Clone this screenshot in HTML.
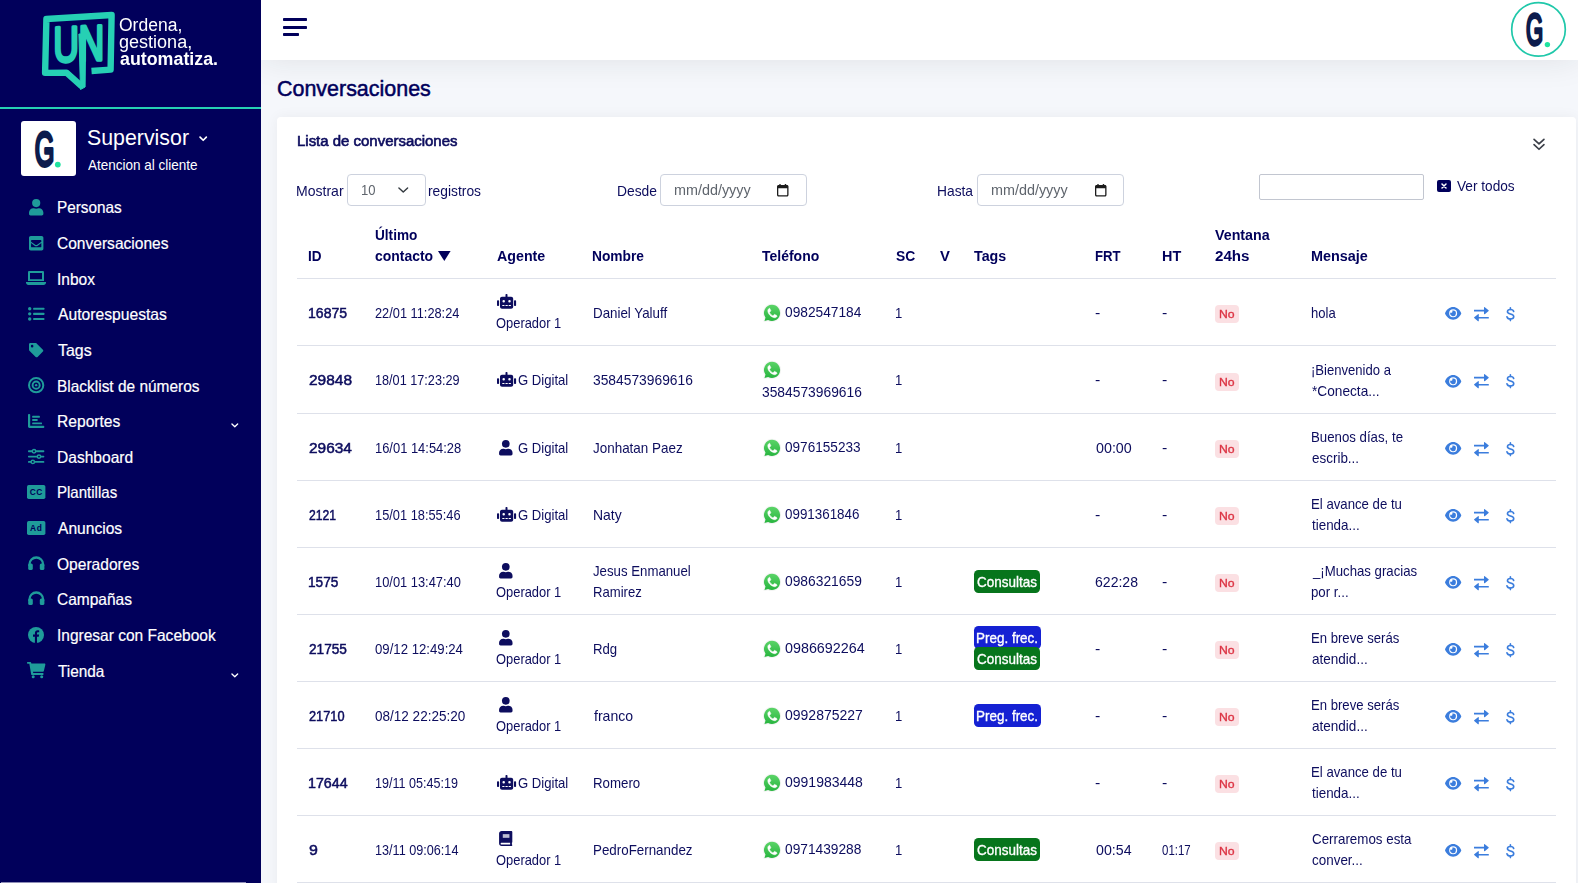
<!DOCTYPE html>
<html lang="es"><head><meta charset="utf-8"><title>Conversaciones</title>
<style>
*{box-sizing:border-box}
html,body{margin:0;padding:0}
body{width:1578px;height:883px;overflow:hidden;position:relative;background:#f5f7fb;
 font-family:"Liberation Sans",sans-serif;font-size:14.5px;color:#0d0d5e}
.t{position:absolute;white-space:nowrap;line-height:20px;transform-origin:0 50%;margin:0;font-weight:400}
.ic{position:absolute;display:block;overflow:visible}
.gray{position:absolute;left:0;top:0;width:1578px;height:883px;will-change:transform}
#sidebar{position:absolute;left:0;top:0;width:261px;height:883px;background:#01005b;z-index:5}
#sidebar .rule{position:absolute;left:0;top:107px;width:261px;height:2px;background:#26d0b4}
#sidebar .avatar{position:absolute;left:21px;top:121px;width:55px;height:55px;background:#fff;border-radius:3px}
#sidebar .hscroll{position:absolute;left:1px;top:882px;width:245px;height:1px;background:#8e8db6}
#topbar{position:absolute;left:261px;top:0;width:1317px;height:60px;background:#fff;box-shadow:0 0 32px 0 rgba(33,37,41,.1)}
#topbar .bar{position:absolute;left:22px;height:3px;background:#01005b;border-radius:.8px}
#card{position:absolute;left:277px;top:117px;width:1299px;height:780px;background:#fff;border-radius:4px;box-shadow:0 0 14px 0 rgba(33,37,41,.05)}
.box{position:absolute;background:#fff;border:1px solid #cdd2de;border-radius:4px}
.hr{position:absolute;left:297px;width:1259px;height:1px;background:#dee1ea}
.badge{position:absolute;border-radius:4px;height:18px}
.no{background:#fbe0e3;width:24px}
.tag{border-radius:4.500px;height:23px}
.nv{-webkit-text-stroke:.2px currentColor}
.med{-webkit-text-stroke:.35px currentColor}
.sb{-webkit-text-stroke:.5px currentColor}
.sb2{-webkit-text-stroke:.65px currentColor}
.xsq{position:absolute;background:#01005b;border-radius:2px}
</style></head><body>
<aside id="sidebar">
<svg class="ic" style="left:0.0px;top:0.0px" width="261.0" height="107.0" viewBox="0 0 261 107" aria-hidden="true"><path d="M91.500 71L110.600 69.600L111.600 15L46.400 19L45.100 72.900L66.500 72.600L81.800 86.400" fill="none" stroke="#26d0b4" stroke-width="6.400" stroke-linejoin="round" stroke-linecap="butt"/><path d="M78.900 34L85.700 34L85.100 87L80.500 89.500z" fill="#26d0b4" stroke="#26d0b4" stroke-width="1" stroke-linejoin="round"/><text transform="translate(53.50 61.90) skewY(-2.4) scale(0.3502 0.4957)" font-family="Liberation Sans, sans-serif" font-size="100" fill="#26d0b4" stroke="#26d0b4" stroke-width="3.2" stroke-linejoin="round" vector-effect="non-scaling-stroke">UN</text></svg>
<div class="gray" style="width:261px;height:100px">
<span class="t" style="left:119.2px;top:15px;font-size:17.6px;color:#fff;transform:scaleX(0.995)">Ordena,</span>
<span class="t" style="left:119.3px;top:32px;font-size:17.6px;color:#fff;transform:scaleX(1.025)">gestiona,</span>
<span class="t" style="left:119.5px;top:49px;font-size:17.6px;font-weight:700;color:#fff;transform:scaleX(1.013)">automatiza.</span>
</div>
<div class="rule"></div>
<div class="avatar"></div>
<svg class="ic" style="left:32.0px;top:127.0px" width="34.0" height="46.0" viewBox="0 0 34 46" aria-hidden="true"><text transform="translate(2.72 38.82) scale(0.2515 0.4850)" font-family="Liberation Sans, sans-serif" font-size="100" fill="#0c1c4d" stroke="#0c1c4d" stroke-width="3.0" stroke-linejoin="round" vector-effect="non-scaling-stroke">G</text><circle cx="25.80" cy="37.60" r="2.9" fill="#1fe3a0"/></svg>
<span class="t" style="left:87.1px;top:127px;font-size:22.8px;color:#fff;transform:scaleX(0.936)">Supervisor</span>
<svg class="ic" style="left:199.0px;top:136.0px" width="8.4" height="5.4" viewBox="0 0 8 5" aria-hidden="true"><path d="M1 1l3 3 3-3" fill="none" stroke="#fff" stroke-width="1.6" stroke-linecap="round" stroke-linejoin="round"/></svg>
<span class="t" style="left:88.0px;top:155px;font-size:14.5px;color:#fff;transform:scaleX(0.931)">Atencion al cliente</span>
<nav>
<svg class="ic" style="left:28.8px;top:198.8px" width="14.4" height="16.4" viewBox="0 0 14 16" fill="#1f9b9a" aria-hidden="true"><circle cx="7" cy="4" r="4"/><path d="M0 14.6v-1.3c0-2.3 1.9-4.2 4.2-4.2h.55c.7.3 1.45.5 2.25.5s1.55-.2 2.25-.5h.55c2.3 0 4.2 1.900 4.2 4.2v1.3c0 .8-.7 1.4-1.500 1.4H1.500c-.8 0-1.500-.6-1.500-1.400z"/></svg>
<a class="t nv" style="left:56.6px;top:197px;font-size:16.5px;color:#fff;transform:scaleX(0.929)">Personas</a>
<svg class="ic" style="left:28.8px;top:235.8px" width="14.4" height="14.4" viewBox="0 0 14 14" fill="#1f9b9a" aria-hidden="true"><path fill-rule="evenodd" d="M1.700 0h10.600c.94 0 1.700.76 1.700 1.700v10.600c0 .94-.76 1.700-1.700 1.700H1.700C.76 14 0 13.240 0 12.300V1.700C0 .76.760 0 1.700 0zM2 4.600v.9l4.100 3c.5.400 1.300.400 1.800 0l4.100-3v-.9c0-.33-.27-.6-.6-.6H2.600c-.33 0-.6.270-.6.600zM2 6.900v3.500c0 .33.270.6.6.6h8.800c.33 0 .6-.27.6-.6V6.900L8.600 9.400c-.95.700-2.250.7-3.200 0z"/></svg>
<a class="t nv" style="left:57.0px;top:233px;font-size:16.5px;color:#fff;transform:scaleX(0.942)">Conversaciones</a>
<svg class="ic" style="left:26.0px;top:271.0px" width="20.0" height="14.0" viewBox="0 0 20 14" fill="#1f9b9a" aria-hidden="true"><path fill-rule="evenodd" d="M3.200 0h13.600c.66 0 1.200.54 1.200 1.200V10H2V1.200C2 .54 2.540 0 3.200 0zM4 2v6.200h12V2z"/><path d="M0 11h20v.6c0 1.300-1.100 2.400-2.400 2.400H2.400C1.100 14 0 12.900 0 11.600z"/></svg>
<a class="t nv" style="left:57.4px;top:269px;font-size:16.5px;color:#fff;transform:scaleX(0.940)">Inbox</a>
<svg class="ic" style="left:28.0px;top:307.1px" width="16.4" height="13.7" viewBox="0 0 16.4 13.7" fill="#1f9b9a" aria-hidden="true"><circle cx="1.700" cy="1.7" r="1.700"/><rect x="5.200" y="0.65" width="11.2" height="2.100" rx=".5"/><circle cx="1.700" cy="6.85" r="1.700"/><rect x="5.200" y="5.80" width="11.2" height="2.100" rx=".5"/><circle cx="1.700" cy="12" r="1.700"/><rect x="5.200" y="10.95" width="11.2" height="2.100" rx=".5"/></svg>
<a class="t nv" style="left:57.8px;top:304px;font-size:16.5px;color:#fff;transform:scaleX(0.950)">Autorespuestas</a>
<svg class="ic" style="left:28.7px;top:342.8px" width="14.3" height="14.3" viewBox="0 0 14.6 14.6" fill="#1f9b9a" aria-hidden="true"><path fill-rule="evenodd" d="M0 6.800V1.400C0 .63.630 0 1.400 0h5.400c.37 0 .73.150.99.410l6.400 6.400c.55.550.55 1.430 0 1.980l-5.400 5.400c-.55.55-1.430.55-1.980 0l-6.400-6.400C.150 7.530 0 7.170 0 6.800zM3.200 1.900a1.300 1.300 0 1 0 0 2.600a1.300 1.300 0 0 0 0-2.600z"/></svg>
<a class="t nv" style="left:57.5px;top:340px;font-size:16.5px;color:#fff;transform:scaleX(0.964)">Tags</a>
<svg class="ic" style="left:28.0px;top:377.0px" width="16.3" height="16.3" viewBox="0 0 16 16" aria-hidden="true"><circle cx="8" cy="8" r="7" fill="none" stroke="#1f9b9a" stroke-width="2"/><circle cx="8" cy="8" r="3.500" fill="none" stroke="#1f9b9a" stroke-width="1.900"/><circle cx="8" cy="8" r="1.200" fill="#1f9b9a"/></svg>
<a class="t nv" style="left:56.6px;top:376px;font-size:16.5px;color:#fff;transform:scaleX(0.936)">Blacklist de números</a>
<svg class="ic" style="left:28.0px;top:414.0px" width="16.3" height="14.0" viewBox="0 0 16.3 14" fill="#1f9b9a" aria-hidden="true"><path d="M0 .8C0 .36.360 0 .8 0h.6c.44 0 .8.360.8.800V11.800h13.300c.44 0 .8.360.8.800v.6c0 .44-.36.8-.8.800H1.400C.630 14 0 13.370 0 12.600z"/><rect x="4.200" y="1.800" width="7.600" height="1.900" rx=".5"/><rect x="4.200" y="5.100" width="5.400" height="1.900" rx=".5"/><rect x="4.200" y="8.400" width="9.800" height="1.900" rx=".5"/></svg>
<a class="t nv" style="left:56.6px;top:411px;font-size:16.5px;color:#fff;transform:scaleX(0.946)">Reportes</a>
<svg class="ic" style="left:231.0px;top:422.6px" width="7.6" height="4.8" viewBox="0 0 8 5" aria-hidden="true"><path d="M1 1l3 3 3-3" fill="none" stroke="#fff" stroke-width="1.4" stroke-linecap="round" stroke-linejoin="round"/></svg>
<svg class="ic" style="left:28.0px;top:449.0px" width="16.3" height="15.2" viewBox="0 0 16.3 15.2" aria-hidden="true"><rect x="0" y="1.35" width="16.3" height="1.900" rx=".7" fill="#1f9b9a"/><circle cx="6" cy="2.3" r="1.700" fill="#01005b" stroke="#1f9b9a" stroke-width="1.500"/><rect x="0" y="6.65" width="16.3" height="1.900" rx=".7" fill="#1f9b9a"/><circle cx="11" cy="7.6" r="1.700" fill="#01005b" stroke="#1f9b9a" stroke-width="1.500"/><rect x="0" y="11.95" width="16.3" height="1.900" rx=".7" fill="#1f9b9a"/><circle cx="4.8" cy="12.9" r="1.700" fill="#01005b" stroke="#1f9b9a" stroke-width="1.500"/></svg>
<a class="t nv" style="left:56.6px;top:447px;font-size:16.5px;color:#fff;transform:scaleX(0.943)">Dashboard</a>
<svg class="ic" style="left:26.8px;top:485.0px" width="18.4" height="14.0" viewBox="0 0 18.4 14" aria-hidden="true"><rect x="0" y="0" width="18.4" height="14" rx="1.700" fill="#1f9b9a"/><text x="9.200" y="10" text-anchor="middle" font-family="Liberation Sans, sans-serif" font-weight="700" font-size="8.4" letter-spacing=".5" fill="#01005b">CC</text></svg>
<a class="t nv" style="left:56.6px;top:482px;font-size:16.5px;color:#fff;transform:scaleX(0.911)">Plantillas</a>
<svg class="ic" style="left:26.8px;top:521.0px" width="18.4" height="14.0" viewBox="0 0 18.4 14" aria-hidden="true"><rect x="0" y="0" width="18.4" height="14" rx="1.700" fill="#1f9b9a"/><text x="9.200" y="10" text-anchor="middle" font-family="Liberation Sans, sans-serif" font-weight="700" font-size="8.4" letter-spacing=".5" fill="#01005b">Ad</text></svg>
<a class="t nv" style="left:57.8px;top:518px;font-size:16.5px;color:#fff;transform:scaleX(0.944)">Anuncios</a>
<svg class="ic" style="left:27.8px;top:556.1px" width="16.6" height="14.0" viewBox="0 0 16.6 14" aria-hidden="true"><path d="M1.500 10V8.300A6.800 6.800 0 0 1 15.100 8.300V10" fill="none" stroke="#1f9b9a" stroke-width="2.300"/><rect x=".2" y="7.400" width="4.600" height="6.600" rx="1.600" fill="#1f9b9a"/><rect x="11.800" y="7.400" width="4.600" height="6.600" rx="1.600" fill="#1f9b9a"/></svg>
<a class="t nv" style="left:57.1px;top:554px;font-size:16.5px;color:#fff;transform:scaleX(0.943)">Operadores</a>
<svg class="ic" style="left:27.8px;top:591.1px" width="16.6" height="14.0" viewBox="0 0 16.6 14" aria-hidden="true"><path d="M1.500 10V8.300A6.800 6.800 0 0 1 15.100 8.300V10" fill="none" stroke="#1f9b9a" stroke-width="2.300"/><rect x=".2" y="7.400" width="4.600" height="6.600" rx="1.600" fill="#1f9b9a"/><rect x="11.800" y="7.400" width="4.600" height="6.600" rx="1.600" fill="#1f9b9a"/></svg>
<a class="t nv" style="left:57.0px;top:589px;font-size:16.5px;color:#fff;transform:scaleX(0.940)">Campañas</a>
<svg class="ic" style="left:28.0px;top:627.0px" width="16.0" height="16.0" viewBox="0 0 16 16" aria-hidden="true"><circle cx="8" cy="8" r="8" fill="#1f9b9a"/><path d="M6.900 16V9.700H5V7.600h1.900V6.200c0-1.900 1.100-2.900 2.800-2.900.6 0 1.200.1 1.500.150v1.900h-1c-.9 0-1.200.5-1.200 1.150V7.600h2.100l-.35 2.100H9V16z" fill="#01005b"/></svg>
<a class="t nv" style="left:57.4px;top:625px;font-size:16.5px;color:#fff;transform:scaleX(0.940)">Ingresar con Facebook</a>
<svg class="ic" style="left:26.8px;top:661.9px" width="18.4" height="16.2" viewBox="0 0 18.4 16.2" fill="#1f9b9a" aria-hidden="true"><path d="M.6 0h2.700c.4 0 .7.250.8.600L4.350 1.600h13.200c.55 0 .95.500.8 1.050l-1.500 6.400c-.1.400-.4.650-.8.650H6l.25 1.300h9.500c.5 0 .9.500.8 1l-.1.500c-.1.350-.4.600-.8.600H5c-.4 0-.7-.25-.8-.650L2.350 1.700H.6C.250 1.700 0 1.400 0 1.100V.6C0 .250.250 0 .600 0z"/><circle cx="6.200" cy="14.700" r="1.500"/><circle cx="14.700" cy="14.700" r="1.500"/></svg>
<a class="t nv" style="left:57.5px;top:661px;font-size:16.5px;color:#fff;transform:scaleX(0.931)">Tienda</a>
<svg class="ic" style="left:231.0px;top:672.6px" width="7.6" height="4.8" viewBox="0 0 8 5" aria-hidden="true"><path d="M1 1l3 3 3-3" fill="none" stroke="#fff" stroke-width="1.4" stroke-linecap="round" stroke-linejoin="round"/></svg>
</nav>
<div class="hscroll"></div>
</aside>
<header id="topbar">
<div class="bar" style="top:18px;width:24px"></div><div class="bar" style="top:26px;width:24px"></div><div class="bar" style="top:33.300px;width:16px"></div>
</header>
<svg class="ic" style="left:1509.0px;top:0.0px" width="60.0" height="60.0" viewBox="0 0 60 60" aria-hidden="true"><circle cx="29.500" cy="29.400" r="26.800" fill="#fff" stroke="#20c8aa" stroke-width="1.700"/></svg>
<svg class="ic" style="left:1523.0px;top:9.0px" width="34.0" height="46.0" viewBox="0 0 34 46" aria-hidden="true"><text transform="translate(3.11 36.32) scale(0.2206 0.4455)" font-family="Liberation Sans, sans-serif" font-size="100" fill="#0c1c4d" stroke="#0c1c4d" stroke-width="2.7" stroke-linejoin="round" vector-effect="non-scaling-stroke">G</text><circle cx="24.40" cy="35.60" r="2.7" fill="#1fe3a0"/></svg>
<main>
<h1 class="t sb" style="left:276.7px;top:79px;font-size:21.7px;color:#01005b;transform:scaleX(0.989)">Conversaciones</h1>
<section class="gray"><div id="card"></div>
<h2 class="t sb2" style="left:297.4px;top:131px;font-size:15.5px;transform:scaleX(0.965)">Lista de conversaciones</h2>
<svg class="ic" style="left:1533.4px;top:138.2px" width="12.0" height="12.6" viewBox="0 0 11.4 11.8" aria-hidden="true"><path d="M1 1.200l4.700 4.400 4.700-4.400M1 6.200l4.700 4.400 4.700-4.400" fill="none" stroke="#3b3f48" stroke-width="1.600" stroke-linecap="round" stroke-linejoin="round"/></svg>
<label class="t" style="left:296.2px;top:181px;font-size:14.5px;transform:scaleX(0.968)">Mostrar</label>
<div class="box" style="left:347px;top:174px;width:79px;height:31.500px"></div>
<span class="t" style="left:360.9px;top:180px;font-size:14.5px;color:#5f656d;transform:scaleX(0.900)">10</span>
<svg class="ic" style="left:397.9px;top:187.2px" width="10.5" height="6.0" viewBox="0 0 10.5 6" aria-hidden="true"><path d="M.9.900l4.350 4.200L9.600.900" fill="none" stroke="#343a40" stroke-width="1.400" stroke-linecap="round" stroke-linejoin="round"/></svg>
<label class="t" style="left:428.0px;top:181px;font-size:14.5px;transform:scaleX(0.953)">registros</label>
<label class="t" style="left:617.2px;top:181px;font-size:14.5px;transform:scaleX(0.954)">Desde</label>
<div class="box" style="left:660.300px;top:174px;width:146.500px;height:31.500px"></div>
<span class="t" style="left:673.5px;top:180px;font-size:14.5px;color:#5f656d;transform:scaleX(0.991)">mm/dd/yyyy</span>
<svg class="ic" style="left:777.3px;top:183.6px" width="11.5" height="12.5" viewBox="0 0 11.5 12.5" fill="#1c1c1c" aria-hidden="true"><path fill-rule="evenodd" d="M1.500 1h8.500c.8 0 1.500.7 1.500 1.500v8.500c0 .8-.7 1.500-1.500 1.500H1.500C.7 12.500 0 11.800 0 11V2.500C0 1.700.700 1 1.500 1zM1.300 4.200v6.600c0 .2.200.4.400.4h8.100c.2 0 .4-.2.400-.4V4.200z"/><rect x="2.300" y="0" width="1.400" height="2.200" rx=".4"/><rect x="7.800" y="0" width="1.400" height="2.200" rx=".4"/></svg>
<label class="t" style="left:937.4px;top:181px;font-size:14.5px;transform:scaleX(0.951)">Hasta</label>
<div class="box" style="left:977.200px;top:174px;width:146.500px;height:31.500px"></div>
<span class="t" style="left:990.7px;top:180px;font-size:14.5px;color:#5f656d;transform:scaleX(0.991)">mm/dd/yyyy</span>
<svg class="ic" style="left:1095.0px;top:183.6px" width="11.5" height="12.5" viewBox="0 0 11.5 12.5" fill="#1c1c1c" aria-hidden="true"><path fill-rule="evenodd" d="M1.500 1h8.500c.8 0 1.500.7 1.500 1.500v8.500c0 .8-.7 1.500-1.500 1.500H1.500C.7 12.500 0 11.800 0 11V2.500C0 1.700.700 1 1.500 1zM1.300 4.200v6.600c0 .2.200.4.400.4h8.100c.2 0 .4-.2.400-.4V4.200z"/><rect x="2.300" y="0" width="1.400" height="2.200" rx=".4"/><rect x="7.800" y="0" width="1.400" height="2.200" rx=".4"/></svg>
<div class="box" style="left:1259px;top:174px;width:165px;height:26px;border-radius:2px;border-color:#c2c6d0"></div>
<div class="xsq" style="left:1437.200px;top:179.700px;width:14px;height:12.200px"></div>
<svg class="ic" style="left:1441.2px;top:182.8px" width="6.0" height="6.0" viewBox="0 0 6 6" aria-hidden="true"><path d="M1 1l4 4M5 1L1 5" stroke="#fff" stroke-width="1.500" stroke-linecap="round"/></svg>
<a class="t" style="left:1456.5px;top:176px;font-size:14.5px;transform:scaleX(0.941)">Ver todos</a>
<div class="thead">
<span class="t" style="left:308.0px;top:246px;font-size:14.5px;font-weight:700;color:#01005b;transform:scaleX(0.933)">ID</span>
<span class="t" style="left:375.1px;top:225px;font-size:14.5px;font-weight:700;color:#01005b;transform:scaleX(0.939)">Último</span>
<span class="t" style="left:375.4px;top:246px;font-size:14.5px;font-weight:700;color:#01005b;transform:scaleX(0.962)">contacto</span>
<span class="t" style="left:496.7px;top:246px;font-size:14.5px;font-weight:700;color:#01005b;transform:scaleX(0.982)">Agente</span>
<span class="t" style="left:592.0px;top:246px;font-size:14.5px;font-weight:700;color:#01005b;transform:scaleX(0.949)">Nombre</span>
<span class="t" style="left:762.3px;top:246px;font-size:14.5px;font-weight:700;color:#01005b;transform:scaleX(0.965)">Teléfono</span>
<span class="t" style="left:896.1px;top:246px;font-size:14.5px;font-weight:700;color:#01005b;transform:scaleX(0.955)">SC</span>
<span class="t" style="left:939.9px;top:246px;font-size:14.5px;font-weight:700;color:#01005b;transform:scaleX(1.021)">V</span>
<span class="t" style="left:973.9px;top:246px;font-size:14.5px;font-weight:700;color:#01005b;transform:scaleX(0.981)">Tags</span>
<span class="t" style="left:1095.2px;top:246px;font-size:14.5px;font-weight:700;color:#01005b;transform:scaleX(0.907)">FRT</span>
<span class="t" style="left:1161.7px;top:246px;font-size:14.5px;font-weight:700;color:#01005b;transform:scaleX(0.991)">HT</span>
<span class="t" style="left:1215.4px;top:225px;font-size:14.5px;font-weight:700;color:#01005b;transform:scaleX(0.983)">Ventana</span>
<span class="t" style="left:1214.9px;top:246px;font-size:14.5px;font-weight:700;color:#01005b;transform:scaleX(1.044)">24hs</span>
<span class="t" style="left:1310.6px;top:246px;font-size:14.5px;font-weight:700;color:#01005b;transform:scaleX(0.994)">Mensaje</span>
<svg class="ic" style="left:438.3px;top:251.0px" width="12.6" height="10.0" viewBox="0 0 12.6 10" aria-hidden="true"><path d="M0 0h12.600L6.300 10z" fill="#01005b"/></svg>
</div>
<div class="hr" style="top:278px"></div>
<div class="row">
<span class="t sb" style="left:308.2px;top:303px;font-size:14.5px;transform:scaleX(0.969)">16875</span>
<span class="t" style="left:375.3px;top:303px;font-size:14.5px;transform:scaleX(0.882)">22/01 11:28:24</span>
<svg class="ic" style="left:496.7px;top:294.0px" width="19.1" height="14.8" viewBox="0 0 19.1 14.8" fill="#0d0d5e" aria-hidden="true"><rect x="0" y="6.200" width="2.100" height="5.800" rx=".8"/><rect x="17" y="6.200" width="2.100" height="5.800" rx=".8"/><rect x="8.500" y="0" width="2" height="4" rx=".7"/><path fill-rule="evenodd" d="M5 2.800h9.200c1.100 0 2 .9 2 2v8c0 1.100-.9 2-2 2H5c-1.100 0-2-.9-2-2v-8c0-1.100.9-2 2-2zM6.700 6.100a1.250 1.250 0 1 0 0 2.500a1.250 1.250 0 0 0 0-2.500zM12.500 6.100a1.250 1.250 0 1 0 0 2.500a1.250 1.250 0 0 0 0-2.500zM5.300 11v1.100h2.200V11zM8.500 11v1.100h2.200V11zM11.700 11v1.100h2.200V11z"/></svg>
<span class="t" style="left:496.1px;top:313px;font-size:14.5px;transform:scaleX(0.890)">Operador 1</span>
<span class="t" style="left:592.6px;top:303px;font-size:14.5px;transform:scaleX(0.920)">Daniel Yaluff</span>
<svg class="ic" style="left:762.0px;top:303.0px" width="20.0" height="20.0" viewBox="0 0 20 20" aria-hidden="true"><defs><linearGradient id="wag" x1="0" y1="0" x2="0" y2="1"><stop offset="0" stop-color="#5bd468"/><stop offset="1" stop-color="#27b43e"/></linearGradient></defs><path d="M10 1.800a8.100 8.100 0 1 1-3.900 15.200L2.500 18.100l1-3.500A8.100 8.100 0 0 1 10 1.800z" fill="#f3f4f3" stroke="#f3f4f3" stroke-width="2" stroke-linejoin="round"/><path d="M10 1.800a8.100 8.100 0 1 1-3.900 15.200L2.500 18.100l1-3.500A8.100 8.100 0 0 1 10 1.800z" fill="url(#wag)"/><path d="M7.400 5.400c-.6 0-1.600 1-1.600 2.300 0 3.200 3.800 7 7 7 1.300 0 2.300-1 2.300-1.600 0-.3-.15-.5-.4-.65l-1.900-.95c-.3-.15-.6-.1-.8.150l-.7.850c-.2.200-.45.250-.7.150-1.300-.55-2.450-1.700-3-3-.1-.25-.05-.5.150-.7l.85-.7c.25-.2.300-.5.150-.8l-.95-1.900c-.15-.25-.35-.4-.65-.4z" fill="#fff" stroke="#fff" stroke-width=".5" stroke-linejoin="round"/></svg>
<span class="t" style="left:784.5px;top:302px;font-size:14.5px;transform:scaleX(0.946)">0982547184</span>
<span class="t" style="left:895.2px;top:303px;font-size:14.5px;transform:scaleX(0.900)">1</span>
<span class="t" style="left:1095.3px;top:303px;font-size:14.5px;transform:scaleX(1.100)">-</span>
<span class="t" style="left:1161.9px;top:303px;font-size:14.5px;transform:scaleX(1.100)">-</span>
<div class="badge no" style="left:1215px;top:305.0px"></div>
<span class="t med" style="left:1218.8px;top:304px;font-size:11.4px;color:#dc3545;transform:scaleX(1.073)">No</span>
<span class="t" style="left:1311.3px;top:303px;font-size:14.5px;transform:scaleX(0.900)">hola</span>
<svg class="ic" style="left:1444.8px;top:307.3px" width="16.3" height="12.7" viewBox="0 0 16.3 12.700" fill="#3b7ddd" aria-hidden="true"><path fill-rule="evenodd" d="M8.150 0C11.700 0 14.700 2.500 16.200 5.900c.1.300.1.600 0 .9C14.700 10.200 11.700 12.700 8.150 12.700S1.600 10.200.1 6.800c-.1-.3-.1-.6 0-.9C1.600 2.500 4.600 0 8.150 0zM8.150 2.350a4 4 0 1 0 0 8a4 4 0 0 0 0-8z"/><path d="M8.150 3.500c-.3 0-.6.050-.9.150.4.550.35 1.300-.15 1.800-.5.500-1.250.55-1.800.15A2.850 2.850 0 1 0 8.150 3.500z"/></svg>
<svg class="ic" style="left:1474.2px;top:306.6px" width="14.8" height="14.4" viewBox="0 0 14.800 14.400" fill="#3b7ddd" aria-hidden="true"><path d="M0 2.800h10V.5c0-.4.500-.65.8-.35l3.800 3.150c.25.200.25.550 0 .75L10.800 7.200c-.3.300-.8.050-.8-.35V4.500H0z"/><path d="M14.800 11.600H4.800v2.300c0 .4-.5.650-.8.350L.2 11.100c-.25-.2-.25-.55 0-.75L4 7.200c.3-.3.800-.05.8.350V9.900h10z"/></svg>
<svg class="ic" style="left:1505.9px;top:306.5px" width="8.8" height="14.4" viewBox="0 0 8.8 14.4" aria-hidden="true"><path d="M7.700 4.500C7.400 3.200 6.200 2.450 4.500 2.450 2.700 2.450 1.450 3.350 1.450 4.700c0 3 6.300 1.500 6.300 4.900 0 1.500-1.300 2.450-3.300 2.450-1.900 0-3.150-.9-3.500-2.300" fill="none" stroke="#3b7ddd" stroke-width="1.600" stroke-linecap="round"/><path d="M4.400 .8v1.600M4.400 12.100v1.500" stroke="#3b7ddd" stroke-width="1.600" stroke-linecap="round"/></svg>
</div>
<div class="hr" style="top:345px"></div>
<div class="row">
<span class="t sb" style="left:308.6px;top:370px;font-size:14.5px;transform:scaleX(1.066)">29848</span>
<span class="t" style="left:374.9px;top:370px;font-size:14.5px;transform:scaleX(0.874)">18/01 17:23:29</span>
<svg class="ic" style="left:496.6px;top:372.3px" width="19.1" height="14.8" viewBox="0 0 19.1 14.8" fill="#0d0d5e" aria-hidden="true"><rect x="0" y="6.200" width="2.100" height="5.800" rx=".8"/><rect x="17" y="6.200" width="2.100" height="5.800" rx=".8"/><rect x="8.500" y="0" width="2" height="4" rx=".7"/><path fill-rule="evenodd" d="M5 2.800h9.200c1.100 0 2 .9 2 2v8c0 1.100-.9 2-2 2H5c-1.100 0-2-.9-2-2v-8c0-1.100.9-2 2-2zM6.700 6.100a1.250 1.250 0 1 0 0 2.500a1.250 1.250 0 0 0 0-2.500zM12.500 6.100a1.250 1.250 0 1 0 0 2.500a1.250 1.250 0 0 0 0-2.500zM5.300 11v1.100h2.200V11zM8.500 11v1.100h2.200V11zM11.700 11v1.100h2.200V11z"/></svg>
<span class="t" style="left:518.3px;top:370px;font-size:14.5px;transform:scaleX(0.904)">G Digital</span>
<span class="t" style="left:593.1px;top:370px;font-size:14.5px;transform:scaleX(0.953)">3584573969616</span>
<svg class="ic" style="left:762.0px;top:360.0px" width="20.0" height="20.0" viewBox="0 0 20 20" aria-hidden="true"><defs><linearGradient id="wag" x1="0" y1="0" x2="0" y2="1"><stop offset="0" stop-color="#5bd468"/><stop offset="1" stop-color="#27b43e"/></linearGradient></defs><path d="M10 1.800a8.100 8.100 0 1 1-3.900 15.200L2.500 18.100l1-3.500A8.100 8.100 0 0 1 10 1.800z" fill="#f3f4f3" stroke="#f3f4f3" stroke-width="2" stroke-linejoin="round"/><path d="M10 1.800a8.100 8.100 0 1 1-3.900 15.200L2.500 18.100l1-3.500A8.100 8.100 0 0 1 10 1.800z" fill="url(#wag)"/><path d="M7.400 5.400c-.6 0-1.600 1-1.600 2.300 0 3.200 3.800 7 7 7 1.300 0 2.300-1 2.300-1.600 0-.3-.15-.5-.4-.65l-1.900-.95c-.3-.15-.6-.1-.8.150l-.7.850c-.2.200-.45.250-.7.150-1.300-.55-2.450-1.700-3-3-.1-.25-.05-.5.150-.7l.85-.7c.25-.2.300-.5.150-.8l-.95-1.900c-.15-.25-.35-.4-.65-.4z" fill="#fff" stroke="#fff" stroke-width=".5" stroke-linejoin="round"/></svg>
<span class="t" style="left:761.9px;top:382px;font-size:14.5px;transform:scaleX(0.953)">3584573969616</span>
<span class="t" style="left:895.2px;top:370px;font-size:14.5px;transform:scaleX(0.900)">1</span>
<span class="t" style="left:1095.3px;top:370px;font-size:14.5px;transform:scaleX(1.100)">-</span>
<span class="t" style="left:1161.9px;top:370px;font-size:14.5px;transform:scaleX(1.100)">-</span>
<div class="badge no" style="left:1215px;top:372.5px"></div>
<span class="t med" style="left:1218.8px;top:372px;font-size:11.4px;color:#dc3545;transform:scaleX(1.073)">No</span>
<span class="t" style="left:1310.7px;top:360px;font-size:14.5px;transform:scaleX(0.901)">¡Bienvenido a</span>
<span class="t" style="left:1312.0px;top:381px;font-size:14.5px;transform:scaleX(0.943)">*Conecta...</span>
<svg class="ic" style="left:1444.8px;top:374.8px" width="16.3" height="12.7" viewBox="0 0 16.3 12.700" fill="#3b7ddd" aria-hidden="true"><path fill-rule="evenodd" d="M8.150 0C11.700 0 14.700 2.500 16.200 5.900c.1.300.1.600 0 .9C14.700 10.200 11.700 12.700 8.150 12.700S1.600 10.200.1 6.800c-.1-.3-.1-.6 0-.9C1.600 2.500 4.600 0 8.150 0zM8.150 2.350a4 4 0 1 0 0 8a4 4 0 0 0 0-8z"/><path d="M8.150 3.500c-.3 0-.6.050-.9.150.4.550.35 1.300-.15 1.800-.5.500-1.250.55-1.800.15A2.850 2.850 0 1 0 8.150 3.500z"/></svg>
<svg class="ic" style="left:1474.2px;top:374.1px" width="14.8" height="14.4" viewBox="0 0 14.800 14.400" fill="#3b7ddd" aria-hidden="true"><path d="M0 2.800h10V.5c0-.4.500-.65.8-.35l3.800 3.150c.25.200.25.550 0 .75L10.800 7.200c-.3.300-.8.050-.8-.35V4.500H0z"/><path d="M14.800 11.600H4.800v2.300c0 .4-.5.650-.8.350L.2 11.100c-.25-.2-.25-.55 0-.75L4 7.200c.3-.3.800-.05.8.350V9.900h10z"/></svg>
<svg class="ic" style="left:1505.9px;top:374.0px" width="8.8" height="14.4" viewBox="0 0 8.8 14.4" aria-hidden="true"><path d="M7.700 4.500C7.400 3.200 6.200 2.450 4.500 2.450 2.700 2.450 1.450 3.350 1.450 4.700c0 3 6.300 1.500 6.300 4.900 0 1.500-1.300 2.450-3.300 2.450-1.900 0-3.150-.9-3.500-2.300" fill="none" stroke="#3b7ddd" stroke-width="1.600" stroke-linecap="round"/><path d="M4.400 .8v1.600M4.400 12.100v1.500" stroke="#3b7ddd" stroke-width="1.600" stroke-linecap="round"/></svg>
</div>
<div class="hr" style="top:413px"></div>
<div class="row">
<span class="t sb" style="left:308.6px;top:438px;font-size:14.5px;transform:scaleX(1.063)">29634</span>
<span class="t" style="left:374.9px;top:438px;font-size:14.5px;transform:scaleX(0.891)">16/01 14:54:28</span>
<svg class="ic" style="left:499.4px;top:439.6px" width="13.6" height="15.4" viewBox="0 0 14 16" fill="#0d0d5e" aria-hidden="true"><circle cx="7" cy="4" r="4"/><path d="M0 14.6v-1.3c0-2.3 1.9-4.2 4.2-4.2h.55c.7.3 1.45.5 2.25.5s1.55-.2 2.25-.5h.55c2.3 0 4.2 1.900 4.2 4.2v1.3c0 .8-.7 1.4-1.500 1.4H1.500c-.8 0-1.500-.6-1.500-1.400z"/></svg>
<span class="t" style="left:518.3px;top:438px;font-size:14.5px;transform:scaleX(0.904)">G Digital</span>
<span class="t" style="left:593.4px;top:438px;font-size:14.5px;transform:scaleX(0.927)">Jonhatan Paez</span>
<svg class="ic" style="left:762.0px;top:438.0px" width="20.0" height="20.0" viewBox="0 0 20 20" aria-hidden="true"><defs><linearGradient id="wag" x1="0" y1="0" x2="0" y2="1"><stop offset="0" stop-color="#5bd468"/><stop offset="1" stop-color="#27b43e"/></linearGradient></defs><path d="M10 1.800a8.100 8.100 0 1 1-3.900 15.200L2.500 18.100l1-3.500A8.100 8.100 0 0 1 10 1.800z" fill="#f3f4f3" stroke="#f3f4f3" stroke-width="2" stroke-linejoin="round"/><path d="M10 1.800a8.100 8.100 0 1 1-3.900 15.200L2.500 18.100l1-3.500A8.100 8.100 0 0 1 10 1.800z" fill="url(#wag)"/><path d="M7.400 5.400c-.6 0-1.600 1-1.600 2.300 0 3.200 3.800 7 7 7 1.300 0 2.300-1 2.300-1.600 0-.3-.15-.5-.4-.65l-1.900-.95c-.3-.15-.6-.1-.8.150l-.7.850c-.2.200-.45.250-.7.150-1.300-.55-2.450-1.700-3-3-.1-.25-.05-.5.150-.7l.85-.7c.25-.2.300-.5.150-.8l-.95-1.900c-.15-.25-.35-.4-.65-.4z" fill="#fff" stroke="#fff" stroke-width=".5" stroke-linejoin="round"/></svg>
<span class="t" style="left:784.5px;top:437px;font-size:14.5px;transform:scaleX(0.937)">0976155233</span>
<span class="t" style="left:895.2px;top:438px;font-size:14.5px;transform:scaleX(0.900)">1</span>
<span class="t" style="left:1095.5px;top:438px;font-size:14.5px;transform:scaleX(0.985)">00:00</span>
<span class="t" style="left:1161.9px;top:438px;font-size:14.5px;transform:scaleX(1.100)">-</span>
<div class="badge no" style="left:1215px;top:440.0px"></div>
<span class="t med" style="left:1218.8px;top:439px;font-size:11.4px;color:#dc3545;transform:scaleX(1.073)">No</span>
<span class="t" style="left:1311.2px;top:427px;font-size:14.5px;transform:scaleX(0.913)">Buenos días, te</span>
<span class="t" style="left:1311.6px;top:448px;font-size:14.5px;transform:scaleX(0.927)">escrib...</span>
<svg class="ic" style="left:1444.8px;top:442.3px" width="16.3" height="12.7" viewBox="0 0 16.3 12.700" fill="#3b7ddd" aria-hidden="true"><path fill-rule="evenodd" d="M8.150 0C11.700 0 14.700 2.500 16.200 5.900c.1.300.1.600 0 .9C14.700 10.200 11.700 12.700 8.150 12.700S1.600 10.200.1 6.800c-.1-.3-.1-.6 0-.9C1.600 2.500 4.600 0 8.150 0zM8.150 2.350a4 4 0 1 0 0 8a4 4 0 0 0 0-8z"/><path d="M8.150 3.500c-.3 0-.6.050-.9.150.4.550.35 1.300-.15 1.800-.5.500-1.250.55-1.800.15A2.850 2.850 0 1 0 8.150 3.500z"/></svg>
<svg class="ic" style="left:1474.2px;top:441.6px" width="14.8" height="14.4" viewBox="0 0 14.800 14.400" fill="#3b7ddd" aria-hidden="true"><path d="M0 2.800h10V.5c0-.4.500-.65.8-.35l3.800 3.150c.25.200.25.550 0 .75L10.800 7.200c-.3.300-.8.050-.8-.35V4.500H0z"/><path d="M14.800 11.600H4.800v2.300c0 .4-.5.650-.8.350L.2 11.100c-.25-.2-.25-.55 0-.75L4 7.200c.3-.3.800-.05.8.350V9.900h10z"/></svg>
<svg class="ic" style="left:1505.9px;top:441.5px" width="8.8" height="14.4" viewBox="0 0 8.8 14.4" aria-hidden="true"><path d="M7.700 4.500C7.400 3.200 6.200 2.450 4.500 2.450 2.700 2.450 1.450 3.350 1.450 4.700c0 3 6.300 1.500 6.300 4.900 0 1.500-1.300 2.450-3.300 2.450-1.900 0-3.150-.9-3.500-2.300" fill="none" stroke="#3b7ddd" stroke-width="1.600" stroke-linecap="round"/><path d="M4.400 .8v1.600M4.400 12.100v1.500" stroke="#3b7ddd" stroke-width="1.600" stroke-linecap="round"/></svg>
</div>
<div class="hr" style="top:480px"></div>
<div class="row">
<span class="t sb" style="left:308.7px;top:505px;font-size:14.5px;transform:scaleX(0.840)">2121</span>
<span class="t" style="left:374.9px;top:505px;font-size:14.5px;transform:scaleX(0.884)">15/01 18:55:46</span>
<svg class="ic" style="left:496.6px;top:506.8px" width="19.1" height="14.8" viewBox="0 0 19.1 14.8" fill="#0d0d5e" aria-hidden="true"><rect x="0" y="6.200" width="2.100" height="5.800" rx=".8"/><rect x="17" y="6.200" width="2.100" height="5.800" rx=".8"/><rect x="8.500" y="0" width="2" height="4" rx=".7"/><path fill-rule="evenodd" d="M5 2.800h9.200c1.100 0 2 .9 2 2v8c0 1.100-.9 2-2 2H5c-1.100 0-2-.9-2-2v-8c0-1.100.9-2 2-2zM6.700 6.100a1.250 1.250 0 1 0 0 2.500a1.250 1.250 0 0 0 0-2.500zM12.500 6.100a1.250 1.250 0 1 0 0 2.500a1.250 1.250 0 0 0 0-2.500zM5.300 11v1.100h2.200V11zM8.500 11v1.100h2.200V11zM11.700 11v1.100h2.200V11z"/></svg>
<span class="t" style="left:518.3px;top:505px;font-size:14.5px;transform:scaleX(0.904)">G Digital</span>
<span class="t" style="left:592.5px;top:505px;font-size:14.5px;transform:scaleX(0.962)">Naty</span>
<svg class="ic" style="left:762.0px;top:505.0px" width="20.0" height="20.0" viewBox="0 0 20 20" aria-hidden="true"><defs><linearGradient id="wag" x1="0" y1="0" x2="0" y2="1"><stop offset="0" stop-color="#5bd468"/><stop offset="1" stop-color="#27b43e"/></linearGradient></defs><path d="M10 1.800a8.100 8.100 0 1 1-3.900 15.200L2.500 18.100l1-3.500A8.100 8.100 0 0 1 10 1.800z" fill="#f3f4f3" stroke="#f3f4f3" stroke-width="2" stroke-linejoin="round"/><path d="M10 1.800a8.100 8.100 0 1 1-3.900 15.200L2.500 18.100l1-3.500A8.100 8.100 0 0 1 10 1.800z" fill="url(#wag)"/><path d="M7.400 5.400c-.6 0-1.600 1-1.600 2.300 0 3.200 3.800 7 7 7 1.300 0 2.300-1 2.300-1.600 0-.3-.15-.5-.4-.65l-1.900-.95c-.3-.15-.6-.1-.8.150l-.7.850c-.2.200-.45.250-.7.150-1.300-.55-2.450-1.700-3-3-.1-.25-.05-.5.150-.7l.85-.7c.25-.2.300-.5.150-.8l-.95-1.900c-.15-.25-.35-.4-.65-.4z" fill="#fff" stroke="#fff" stroke-width=".5" stroke-linejoin="round"/></svg>
<span class="t" style="left:784.5px;top:504px;font-size:14.5px;transform:scaleX(0.923)">0991361846</span>
<span class="t" style="left:895.2px;top:505px;font-size:14.5px;transform:scaleX(0.900)">1</span>
<span class="t" style="left:1095.3px;top:505px;font-size:14.5px;transform:scaleX(1.100)">-</span>
<span class="t" style="left:1161.9px;top:505px;font-size:14.5px;transform:scaleX(1.100)">-</span>
<div class="badge no" style="left:1215px;top:507.0px"></div>
<span class="t med" style="left:1218.8px;top:506px;font-size:11.4px;color:#dc3545;transform:scaleX(1.073)">No</span>
<span class="t" style="left:1311.2px;top:494px;font-size:14.5px;transform:scaleX(0.910)">El avance de tu</span>
<span class="t" style="left:1312.0px;top:515px;font-size:14.5px;transform:scaleX(0.924)">tienda...</span>
<svg class="ic" style="left:1444.8px;top:509.3px" width="16.3" height="12.7" viewBox="0 0 16.3 12.700" fill="#3b7ddd" aria-hidden="true"><path fill-rule="evenodd" d="M8.150 0C11.700 0 14.700 2.500 16.200 5.900c.1.300.1.600 0 .9C14.700 10.200 11.700 12.700 8.150 12.700S1.600 10.200.1 6.800c-.1-.3-.1-.6 0-.9C1.600 2.500 4.600 0 8.150 0zM8.150 2.350a4 4 0 1 0 0 8a4 4 0 0 0 0-8z"/><path d="M8.150 3.500c-.3 0-.6.050-.9.150.4.550.35 1.300-.15 1.800-.5.500-1.250.55-1.800.15A2.850 2.850 0 1 0 8.150 3.500z"/></svg>
<svg class="ic" style="left:1474.2px;top:508.6px" width="14.8" height="14.4" viewBox="0 0 14.800 14.400" fill="#3b7ddd" aria-hidden="true"><path d="M0 2.800h10V.5c0-.4.500-.65.8-.35l3.800 3.150c.25.200.25.550 0 .75L10.800 7.200c-.3.300-.8.050-.8-.35V4.500H0z"/><path d="M14.800 11.600H4.800v2.300c0 .4-.5.650-.8.350L.2 11.100c-.25-.2-.25-.55 0-.75L4 7.200c.3-.3.800-.05.8.350V9.900h10z"/></svg>
<svg class="ic" style="left:1505.9px;top:508.5px" width="8.8" height="14.4" viewBox="0 0 8.8 14.4" aria-hidden="true"><path d="M7.700 4.500C7.400 3.200 6.200 2.450 4.500 2.450 2.700 2.450 1.450 3.350 1.450 4.700c0 3 6.300 1.500 6.300 4.900 0 1.500-1.300 2.450-3.300 2.450-1.900 0-3.150-.9-3.500-2.300" fill="none" stroke="#3b7ddd" stroke-width="1.600" stroke-linecap="round"/><path d="M4.400 .8v1.600M4.400 12.100v1.500" stroke="#3b7ddd" stroke-width="1.600" stroke-linecap="round"/></svg>
</div>
<div class="hr" style="top:547px"></div>
<div class="row">
<span class="t sb" style="left:308.3px;top:572px;font-size:14.5px;transform:scaleX(0.939)">1575</span>
<span class="t" style="left:374.9px;top:572px;font-size:14.5px;transform:scaleX(0.887)">10/01 13:47:40</span>
<svg class="ic" style="left:499.4px;top:562.7px" width="13.6" height="15.4" viewBox="0 0 14 16" fill="#0d0d5e" aria-hidden="true"><circle cx="7" cy="4" r="4"/><path d="M0 14.6v-1.3c0-2.3 1.9-4.2 4.2-4.2h.55c.7.3 1.45.5 2.25.5s1.55-.2 2.25-.5h.55c2.3 0 4.2 1.900 4.2 4.2v1.3c0 .8-.7 1.4-1.500 1.4H1.500c-.8 0-1.500-.6-1.500-1.400z"/></svg>
<span class="t" style="left:496.1px;top:582px;font-size:14.5px;transform:scaleX(0.890)">Operador 1</span>
<span class="t" style="left:593.4px;top:561px;font-size:14.5px;transform:scaleX(0.912)">Jesus Enmanuel</span>
<span class="t" style="left:592.6px;top:582px;font-size:14.5px;transform:scaleX(0.904)">Ramirez</span>
<svg class="ic" style="left:762.0px;top:572.0px" width="20.0" height="20.0" viewBox="0 0 20 20" aria-hidden="true"><defs><linearGradient id="wag" x1="0" y1="0" x2="0" y2="1"><stop offset="0" stop-color="#5bd468"/><stop offset="1" stop-color="#27b43e"/></linearGradient></defs><path d="M10 1.800a8.100 8.100 0 1 1-3.900 15.200L2.500 18.100l1-3.500A8.100 8.100 0 0 1 10 1.800z" fill="#f3f4f3" stroke="#f3f4f3" stroke-width="2" stroke-linejoin="round"/><path d="M10 1.800a8.100 8.100 0 1 1-3.900 15.200L2.500 18.100l1-3.500A8.100 8.100 0 0 1 10 1.800z" fill="url(#wag)"/><path d="M7.400 5.400c-.6 0-1.600 1-1.600 2.300 0 3.200 3.800 7 7 7 1.300 0 2.300-1 2.300-1.600 0-.3-.15-.5-.4-.65l-1.900-.95c-.3-.15-.6-.1-.8.150l-.7.850c-.2.200-.45.250-.7.150-1.300-.55-2.450-1.700-3-3-.1-.25-.05-.5.150-.7l.85-.7c.25-.2.300-.5.150-.8l-.95-1.900c-.15-.25-.35-.4-.65-.4z" fill="#fff" stroke="#fff" stroke-width=".5" stroke-linejoin="round"/></svg>
<span class="t" style="left:784.5px;top:571px;font-size:14.5px;transform:scaleX(0.953)">0986321659</span>
<span class="t" style="left:895.2px;top:572px;font-size:14.5px;transform:scaleX(0.900)">1</span>
<div class="badge tag" style="left:974px;top:570.1px;width:66.200px;background:#07751c"></div>
<span class="t med" style="left:976.7px;top:572px;font-size:14.5px;color:#fff;transform:scaleX(0.930)">Consultas</span>
<span class="t" style="left:1095.3px;top:572px;font-size:14.5px;transform:scaleX(0.969)">622:28</span>
<span class="t" style="left:1161.9px;top:572px;font-size:14.5px;transform:scaleX(1.100)">-</span>
<div class="badge no" style="left:1215px;top:574.0px"></div>
<span class="t med" style="left:1218.8px;top:573px;font-size:11.4px;color:#dc3545;transform:scaleX(1.073)">No</span>
<span class="t" style="left:1312.5px;top:561px;font-size:14.5px;transform:scaleX(0.910)">_¡Muchas gracias</span>
<span class="t" style="left:1311.4px;top:582px;font-size:14.5px;transform:scaleX(0.914)">por r...</span>
<svg class="ic" style="left:1444.8px;top:576.3px" width="16.3" height="12.7" viewBox="0 0 16.3 12.700" fill="#3b7ddd" aria-hidden="true"><path fill-rule="evenodd" d="M8.150 0C11.700 0 14.700 2.500 16.200 5.900c.1.300.1.600 0 .9C14.700 10.200 11.700 12.700 8.150 12.700S1.600 10.200.1 6.800c-.1-.3-.1-.6 0-.9C1.600 2.500 4.600 0 8.150 0zM8.150 2.350a4 4 0 1 0 0 8a4 4 0 0 0 0-8z"/><path d="M8.150 3.500c-.3 0-.6.050-.9.150.4.550.35 1.300-.15 1.800-.5.500-1.250.55-1.800.15A2.850 2.850 0 1 0 8.150 3.500z"/></svg>
<svg class="ic" style="left:1474.2px;top:575.6px" width="14.8" height="14.4" viewBox="0 0 14.800 14.400" fill="#3b7ddd" aria-hidden="true"><path d="M0 2.800h10V.5c0-.4.500-.65.8-.35l3.800 3.150c.25.200.25.550 0 .75L10.800 7.200c-.3.300-.8.050-.8-.35V4.500H0z"/><path d="M14.800 11.600H4.800v2.300c0 .4-.5.650-.8.350L.2 11.100c-.25-.2-.25-.55 0-.75L4 7.200c.3-.3.800-.05.8.350V9.900h10z"/></svg>
<svg class="ic" style="left:1505.9px;top:575.5px" width="8.8" height="14.4" viewBox="0 0 8.8 14.4" aria-hidden="true"><path d="M7.700 4.500C7.400 3.200 6.200 2.450 4.500 2.450 2.700 2.450 1.450 3.350 1.450 4.700c0 3 6.300 1.500 6.300 4.900 0 1.500-1.300 2.450-3.300 2.450-1.900 0-3.150-.9-3.500-2.300" fill="none" stroke="#3b7ddd" stroke-width="1.600" stroke-linecap="round"/><path d="M4.400 .8v1.600M4.400 12.100v1.500" stroke="#3b7ddd" stroke-width="1.600" stroke-linecap="round"/></svg>
</div>
<div class="hr" style="top:614px"></div>
<div class="row">
<span class="t sb" style="left:308.6px;top:639px;font-size:14.5px;transform:scaleX(0.940)">21755</span>
<span class="t" style="left:375.4px;top:639px;font-size:14.5px;transform:scaleX(0.909)">09/12 12:49:24</span>
<svg class="ic" style="left:499.4px;top:629.7px" width="13.6" height="15.4" viewBox="0 0 14 16" fill="#0d0d5e" aria-hidden="true"><circle cx="7" cy="4" r="4"/><path d="M0 14.6v-1.3c0-2.3 1.9-4.2 4.2-4.2h.55c.7.3 1.45.5 2.25.5s1.55-.2 2.25-.5h.55c2.3 0 4.2 1.900 4.2 4.2v1.3c0 .8-.7 1.4-1.500 1.4H1.500c-.8 0-1.500-.6-1.500-1.400z"/></svg>
<span class="t" style="left:496.1px;top:649px;font-size:14.5px;transform:scaleX(0.890)">Operador 1</span>
<span class="t" style="left:592.6px;top:639px;font-size:14.5px;transform:scaleX(0.909)">Rdg</span>
<svg class="ic" style="left:762.0px;top:639.0px" width="20.0" height="20.0" viewBox="0 0 20 20" aria-hidden="true"><defs><linearGradient id="wag" x1="0" y1="0" x2="0" y2="1"><stop offset="0" stop-color="#5bd468"/><stop offset="1" stop-color="#27b43e"/></linearGradient></defs><path d="M10 1.800a8.100 8.100 0 1 1-3.900 15.200L2.500 18.100l1-3.500A8.100 8.100 0 0 1 10 1.800z" fill="#f3f4f3" stroke="#f3f4f3" stroke-width="2" stroke-linejoin="round"/><path d="M10 1.800a8.100 8.100 0 1 1-3.900 15.200L2.500 18.100l1-3.500A8.100 8.100 0 0 1 10 1.800z" fill="url(#wag)"/><path d="M7.400 5.400c-.6 0-1.600 1-1.600 2.300 0 3.200 3.800 7 7 7 1.300 0 2.300-1 2.300-1.600 0-.3-.15-.5-.4-.65l-1.900-.95c-.3-.15-.6-.1-.8.150l-.7.850c-.2.200-.45.250-.7.150-1.300-.55-2.450-1.700-3-3-.1-.25-.05-.5.150-.7l.85-.7c.25-.2.300-.5.150-.8l-.95-1.900c-.15-.25-.35-.4-.65-.4z" fill="#fff" stroke="#fff" stroke-width=".5" stroke-linejoin="round"/></svg>
<span class="t" style="left:784.5px;top:638px;font-size:14.5px;transform:scaleX(0.988)">0986692264</span>
<span class="t" style="left:895.2px;top:639px;font-size:14.5px;transform:scaleX(0.900)">1</span>
<div class="badge tag" style="left:974px;top:625.8px;width:67.100px;background:#1521d3"></div>
<span class="t med" style="left:976.4px;top:628px;font-size:14.5px;color:#fff;transform:scaleX(0.928)">Preg. frec.</span>
<div class="badge tag" style="left:974px;top:647.0px;width:66.200px;background:#07751c"></div>
<span class="t med" style="left:976.7px;top:649px;font-size:14.5px;color:#fff;transform:scaleX(0.930)">Consultas</span>
<span class="t" style="left:1095.3px;top:639px;font-size:14.5px;transform:scaleX(1.100)">-</span>
<span class="t" style="left:1161.9px;top:639px;font-size:14.5px;transform:scaleX(1.100)">-</span>
<div class="badge no" style="left:1215px;top:641.0px"></div>
<span class="t med" style="left:1218.8px;top:640px;font-size:11.4px;color:#dc3545;transform:scaleX(1.073)">No</span>
<span class="t" style="left:1311.2px;top:628px;font-size:14.5px;transform:scaleX(0.905)">En breve serás</span>
<span class="t" style="left:1311.6px;top:649px;font-size:14.5px;transform:scaleX(0.933)">atendid...</span>
<svg class="ic" style="left:1444.8px;top:643.3px" width="16.3" height="12.7" viewBox="0 0 16.3 12.700" fill="#3b7ddd" aria-hidden="true"><path fill-rule="evenodd" d="M8.150 0C11.700 0 14.700 2.500 16.200 5.900c.1.300.1.600 0 .9C14.700 10.200 11.700 12.700 8.150 12.700S1.600 10.200.1 6.800c-.1-.3-.1-.6 0-.9C1.600 2.500 4.600 0 8.150 0zM8.150 2.350a4 4 0 1 0 0 8a4 4 0 0 0 0-8z"/><path d="M8.150 3.500c-.3 0-.6.050-.9.150.4.550.35 1.300-.15 1.800-.5.500-1.250.55-1.800.15A2.850 2.850 0 1 0 8.150 3.500z"/></svg>
<svg class="ic" style="left:1474.2px;top:642.6px" width="14.8" height="14.4" viewBox="0 0 14.800 14.400" fill="#3b7ddd" aria-hidden="true"><path d="M0 2.800h10V.5c0-.4.500-.65.8-.35l3.800 3.150c.25.200.25.550 0 .75L10.800 7.200c-.3.300-.8.050-.8-.35V4.500H0z"/><path d="M14.800 11.600H4.800v2.300c0 .4-.5.650-.8.350L.2 11.100c-.25-.2-.25-.55 0-.75L4 7.200c.3-.3.800-.05.8.350V9.900h10z"/></svg>
<svg class="ic" style="left:1505.9px;top:642.5px" width="8.8" height="14.4" viewBox="0 0 8.8 14.4" aria-hidden="true"><path d="M7.700 4.500C7.400 3.200 6.200 2.450 4.500 2.450 2.700 2.450 1.450 3.350 1.450 4.700c0 3 6.300 1.500 6.300 4.900 0 1.500-1.300 2.450-3.300 2.450-1.900 0-3.150-.9-3.500-2.300" fill="none" stroke="#3b7ddd" stroke-width="1.600" stroke-linecap="round"/><path d="M4.400 .8v1.600M4.400 12.100v1.500" stroke="#3b7ddd" stroke-width="1.600" stroke-linecap="round"/></svg>
</div>
<div class="hr" style="top:681px"></div>
<div class="row">
<span class="t sb" style="left:308.7px;top:706px;font-size:14.5px;transform:scaleX(0.881)">21710</span>
<span class="t" style="left:375.4px;top:706px;font-size:14.5px;transform:scaleX(0.933)">08/12 22:25:20</span>
<svg class="ic" style="left:499.4px;top:696.7px" width="13.6" height="15.4" viewBox="0 0 14 16" fill="#0d0d5e" aria-hidden="true"><circle cx="7" cy="4" r="4"/><path d="M0 14.6v-1.3c0-2.3 1.9-4.2 4.2-4.2h.55c.7.3 1.45.5 2.25.5s1.55-.2 2.25-.5h.55c2.3 0 4.2 1.900 4.2 4.2v1.3c0 .8-.7 1.4-1.500 1.4H1.500c-.8 0-1.500-.6-1.500-1.400z"/></svg>
<span class="t" style="left:496.1px;top:716px;font-size:14.5px;transform:scaleX(0.890)">Operador 1</span>
<span class="t" style="left:594.4px;top:706px;font-size:14.5px;transform:scaleX(0.970)">franco</span>
<svg class="ic" style="left:762.0px;top:706.0px" width="20.0" height="20.0" viewBox="0 0 20 20" aria-hidden="true"><defs><linearGradient id="wag" x1="0" y1="0" x2="0" y2="1"><stop offset="0" stop-color="#5bd468"/><stop offset="1" stop-color="#27b43e"/></linearGradient></defs><path d="M10 1.800a8.100 8.100 0 1 1-3.900 15.200L2.500 18.100l1-3.500A8.100 8.100 0 0 1 10 1.800z" fill="#f3f4f3" stroke="#f3f4f3" stroke-width="2" stroke-linejoin="round"/><path d="M10 1.800a8.100 8.100 0 1 1-3.900 15.200L2.500 18.100l1-3.500A8.100 8.100 0 0 1 10 1.800z" fill="url(#wag)"/><path d="M7.400 5.400c-.6 0-1.600 1-1.600 2.300 0 3.200 3.800 7 7 7 1.300 0 2.300-1 2.300-1.600 0-.3-.15-.5-.4-.65l-1.900-.95c-.3-.15-.6-.1-.8.150l-.7.850c-.2.200-.45.250-.7.150-1.300-.55-2.450-1.700-3-3-.1-.25-.05-.5.150-.7l.85-.7c.25-.2.300-.5.150-.8l-.95-1.900c-.15-.25-.35-.4-.65-.4z" fill="#fff" stroke="#fff" stroke-width=".5" stroke-linejoin="round"/></svg>
<span class="t" style="left:784.5px;top:705px;font-size:14.5px;transform:scaleX(0.965)">0992875227</span>
<span class="t" style="left:895.2px;top:706px;font-size:14.5px;transform:scaleX(0.900)">1</span>
<div class="badge tag" style="left:974px;top:704.1px;width:67.100px;background:#1521d3"></div>
<span class="t med" style="left:976.4px;top:706px;font-size:14.5px;color:#fff;transform:scaleX(0.928)">Preg. frec.</span>
<span class="t" style="left:1095.3px;top:706px;font-size:14.5px;transform:scaleX(1.100)">-</span>
<span class="t" style="left:1161.9px;top:706px;font-size:14.5px;transform:scaleX(1.100)">-</span>
<div class="badge no" style="left:1215px;top:708.0px"></div>
<span class="t med" style="left:1218.8px;top:707px;font-size:11.4px;color:#dc3545;transform:scaleX(1.073)">No</span>
<span class="t" style="left:1311.2px;top:695px;font-size:14.5px;transform:scaleX(0.905)">En breve serás</span>
<span class="t" style="left:1311.6px;top:716px;font-size:14.5px;transform:scaleX(0.933)">atendid...</span>
<svg class="ic" style="left:1444.8px;top:710.3px" width="16.3" height="12.7" viewBox="0 0 16.3 12.700" fill="#3b7ddd" aria-hidden="true"><path fill-rule="evenodd" d="M8.150 0C11.700 0 14.700 2.500 16.200 5.900c.1.300.1.600 0 .9C14.700 10.200 11.700 12.700 8.150 12.700S1.600 10.200.1 6.800c-.1-.3-.1-.6 0-.9C1.600 2.500 4.600 0 8.150 0zM8.150 2.350a4 4 0 1 0 0 8a4 4 0 0 0 0-8z"/><path d="M8.150 3.500c-.3 0-.6.050-.9.150.4.550.35 1.300-.15 1.800-.5.500-1.250.55-1.800.15A2.850 2.850 0 1 0 8.150 3.500z"/></svg>
<svg class="ic" style="left:1474.2px;top:709.6px" width="14.8" height="14.4" viewBox="0 0 14.800 14.400" fill="#3b7ddd" aria-hidden="true"><path d="M0 2.800h10V.5c0-.4.500-.65.8-.35l3.800 3.150c.25.200.25.550 0 .75L10.800 7.200c-.3.300-.8.050-.8-.35V4.500H0z"/><path d="M14.800 11.600H4.800v2.300c0 .4-.5.650-.8.350L.2 11.100c-.25-.2-.25-.55 0-.75L4 7.200c.3-.3.800-.05.8.350V9.900h10z"/></svg>
<svg class="ic" style="left:1505.9px;top:709.5px" width="8.8" height="14.4" viewBox="0 0 8.8 14.4" aria-hidden="true"><path d="M7.700 4.500C7.400 3.200 6.200 2.450 4.500 2.450 2.700 2.450 1.450 3.350 1.450 4.700c0 3 6.300 1.500 6.300 4.900 0 1.500-1.300 2.450-3.300 2.450-1.900 0-3.150-.9-3.500-2.300" fill="none" stroke="#3b7ddd" stroke-width="1.600" stroke-linecap="round"/><path d="M4.400 .8v1.600M4.400 12.100v1.500" stroke="#3b7ddd" stroke-width="1.600" stroke-linecap="round"/></svg>
</div>
<div class="hr" style="top:748px"></div>
<div class="row">
<span class="t sb" style="left:308.2px;top:773px;font-size:14.5px;transform:scaleX(0.982)">17644</span>
<span class="t" style="left:374.9px;top:773px;font-size:14.5px;transform:scaleX(0.866)">19/11 05:45:19</span>
<svg class="ic" style="left:496.6px;top:774.8px" width="19.1" height="14.8" viewBox="0 0 19.1 14.8" fill="#0d0d5e" aria-hidden="true"><rect x="0" y="6.200" width="2.100" height="5.800" rx=".8"/><rect x="17" y="6.200" width="2.100" height="5.800" rx=".8"/><rect x="8.500" y="0" width="2" height="4" rx=".7"/><path fill-rule="evenodd" d="M5 2.800h9.200c1.100 0 2 .9 2 2v8c0 1.100-.9 2-2 2H5c-1.100 0-2-.9-2-2v-8c0-1.100.9-2 2-2zM6.700 6.100a1.250 1.250 0 1 0 0 2.500a1.250 1.250 0 0 0 0-2.500zM12.500 6.100a1.250 1.250 0 1 0 0 2.500a1.250 1.250 0 0 0 0-2.500zM5.300 11v1.100h2.200V11zM8.500 11v1.100h2.200V11zM11.700 11v1.100h2.200V11z"/></svg>
<span class="t" style="left:518.3px;top:773px;font-size:14.5px;transform:scaleX(0.904)">G Digital</span>
<span class="t" style="left:592.6px;top:773px;font-size:14.5px;transform:scaleX(0.916)">Romero</span>
<svg class="ic" style="left:762.0px;top:773.0px" width="20.0" height="20.0" viewBox="0 0 20 20" aria-hidden="true"><defs><linearGradient id="wag" x1="0" y1="0" x2="0" y2="1"><stop offset="0" stop-color="#5bd468"/><stop offset="1" stop-color="#27b43e"/></linearGradient></defs><path d="M10 1.800a8.100 8.100 0 1 1-3.900 15.200L2.500 18.100l1-3.500A8.100 8.100 0 0 1 10 1.800z" fill="#f3f4f3" stroke="#f3f4f3" stroke-width="2" stroke-linejoin="round"/><path d="M10 1.800a8.100 8.100 0 1 1-3.900 15.200L2.500 18.100l1-3.500A8.100 8.100 0 0 1 10 1.800z" fill="url(#wag)"/><path d="M7.400 5.400c-.6 0-1.600 1-1.600 2.300 0 3.200 3.800 7 7 7 1.300 0 2.300-1 2.300-1.600 0-.3-.15-.5-.4-.65l-1.900-.95c-.3-.15-.6-.1-.8.150l-.7.850c-.2.200-.45.250-.7.150-1.300-.55-2.450-1.700-3-3-.1-.25-.05-.5.150-.7l.85-.7c.25-.2.300-.5.150-.8l-.95-1.900c-.15-.25-.35-.4-.65-.4z" fill="#fff" stroke="#fff" stroke-width=".5" stroke-linejoin="round"/></svg>
<span class="t" style="left:784.5px;top:772px;font-size:14.5px;transform:scaleX(0.965)">0991983448</span>
<span class="t" style="left:895.2px;top:773px;font-size:14.5px;transform:scaleX(0.900)">1</span>
<span class="t" style="left:1095.3px;top:773px;font-size:14.5px;transform:scaleX(1.100)">-</span>
<span class="t" style="left:1161.9px;top:773px;font-size:14.5px;transform:scaleX(1.100)">-</span>
<div class="badge no" style="left:1215px;top:775.0px"></div>
<span class="t med" style="left:1218.8px;top:774px;font-size:11.4px;color:#dc3545;transform:scaleX(1.073)">No</span>
<span class="t" style="left:1311.2px;top:762px;font-size:14.5px;transform:scaleX(0.910)">El avance de tu</span>
<span class="t" style="left:1312.0px;top:783px;font-size:14.5px;transform:scaleX(0.924)">tienda...</span>
<svg class="ic" style="left:1444.8px;top:777.3px" width="16.3" height="12.7" viewBox="0 0 16.3 12.700" fill="#3b7ddd" aria-hidden="true"><path fill-rule="evenodd" d="M8.150 0C11.700 0 14.700 2.500 16.200 5.900c.1.300.1.600 0 .9C14.700 10.200 11.700 12.700 8.150 12.700S1.600 10.200.1 6.800c-.1-.3-.1-.6 0-.9C1.600 2.500 4.600 0 8.150 0zM8.150 2.350a4 4 0 1 0 0 8a4 4 0 0 0 0-8z"/><path d="M8.150 3.500c-.3 0-.6.050-.9.150.4.550.35 1.300-.15 1.800-.5.500-1.250.55-1.800.15A2.850 2.850 0 1 0 8.150 3.500z"/></svg>
<svg class="ic" style="left:1474.2px;top:776.6px" width="14.8" height="14.4" viewBox="0 0 14.800 14.400" fill="#3b7ddd" aria-hidden="true"><path d="M0 2.800h10V.5c0-.4.500-.65.8-.35l3.800 3.150c.25.200.25.550 0 .75L10.800 7.200c-.3.300-.8.050-.8-.35V4.500H0z"/><path d="M14.800 11.600H4.800v2.300c0 .4-.5.650-.8.350L.2 11.100c-.25-.2-.25-.55 0-.75L4 7.200c.3-.3.800-.05.8.350V9.900h10z"/></svg>
<svg class="ic" style="left:1505.9px;top:776.5px" width="8.8" height="14.4" viewBox="0 0 8.8 14.4" aria-hidden="true"><path d="M7.700 4.500C7.400 3.200 6.200 2.450 4.500 2.450 2.700 2.450 1.450 3.350 1.450 4.700c0 3 6.300 1.500 6.300 4.900 0 1.500-1.300 2.450-3.300 2.450-1.900 0-3.150-.9-3.500-2.300" fill="none" stroke="#3b7ddd" stroke-width="1.600" stroke-linecap="round"/><path d="M4.400 .8v1.600M4.400 12.100v1.500" stroke="#3b7ddd" stroke-width="1.600" stroke-linecap="round"/></svg>
</div>
<div class="hr" style="top:815px"></div>
<div class="row">
<span class="t sb" style="left:308.6px;top:840px;font-size:14.5px;transform:scaleX(1.100)">9</span>
<span class="t" style="left:374.9px;top:840px;font-size:14.5px;transform:scaleX(0.872)">13/11 09:06:14</span>
<svg class="ic" style="left:499.4px;top:830.8px" width="13.4" height="15.1" viewBox="0 0 13.5 15.4" fill="#0d0d5e" aria-hidden="true"><path fill-rule="evenodd" d="M2.600 0h10c.5 0 .9.400.9.900v10.200c0 .3-.15.550-.35.700-.1.500-.1 1.600 0 2.050.2.150.35.400.35.700v.1c0 .4-.35.750-.75.750H2.600C1.150 15.400 0 14.250 0 12.800V2.600C0 1.150 1.150 0 2.600 0zM3.800 3.500v1h6.700v-1zM3.800 5.600v1h6.700v-1zM2.600 12c-.55 0-1 .4-1 .9s.45.900 1 .9h8.700c-.05-.55-.05-1.250 0-1.800z"/><rect x="3.800" y="3.500" width="6.700" height="3.100" fill="#fff" opacity=".45"/></svg>
<span class="t" style="left:496.1px;top:850px;font-size:14.5px;transform:scaleX(0.890)">Operador 1</span>
<span class="t" style="left:592.6px;top:840px;font-size:14.5px;transform:scaleX(0.921)">PedroFernandez</span>
<svg class="ic" style="left:762.0px;top:840.0px" width="20.0" height="20.0" viewBox="0 0 20 20" aria-hidden="true"><defs><linearGradient id="wag" x1="0" y1="0" x2="0" y2="1"><stop offset="0" stop-color="#5bd468"/><stop offset="1" stop-color="#27b43e"/></linearGradient></defs><path d="M10 1.800a8.100 8.100 0 1 1-3.900 15.200L2.500 18.100l1-3.500A8.100 8.100 0 0 1 10 1.800z" fill="#f3f4f3" stroke="#f3f4f3" stroke-width="2" stroke-linejoin="round"/><path d="M10 1.800a8.100 8.100 0 1 1-3.900 15.200L2.500 18.100l1-3.500A8.100 8.100 0 0 1 10 1.800z" fill="url(#wag)"/><path d="M7.400 5.400c-.6 0-1.600 1-1.600 2.300 0 3.200 3.800 7 7 7 1.300 0 2.300-1 2.300-1.600 0-.3-.15-.5-.4-.65l-1.900-.95c-.3-.15-.6-.1-.8.150l-.7.850c-.2.200-.45.250-.7.150-1.300-.55-2.450-1.700-3-3-.1-.25-.05-.5.150-.7l.85-.7c.25-.2.300-.5.150-.8l-.95-1.900c-.15-.25-.35-.4-.65-.4z" fill="#fff" stroke="#fff" stroke-width=".5" stroke-linejoin="round"/></svg>
<span class="t" style="left:784.5px;top:839px;font-size:14.5px;transform:scaleX(0.946)">0971439288</span>
<span class="t" style="left:895.2px;top:840px;font-size:14.5px;transform:scaleX(0.900)">1</span>
<div class="badge tag" style="left:974px;top:838.1px;width:66.200px;background:#07751c"></div>
<span class="t med" style="left:976.7px;top:840px;font-size:14.5px;color:#fff;transform:scaleX(0.930)">Consultas</span>
<span class="t" style="left:1095.5px;top:840px;font-size:14.5px;transform:scaleX(0.979)">00:54</span>
<span class="t" style="left:1162.2px;top:840px;font-size:14.5px;transform:scaleX(0.791)">01:17</span>
<div class="badge no" style="left:1215px;top:842.0px"></div>
<span class="t med" style="left:1218.8px;top:841px;font-size:11.4px;color:#dc3545;transform:scaleX(1.073)">No</span>
<span class="t" style="left:1311.6px;top:829px;font-size:14.5px;transform:scaleX(0.921)">Cerraremos esta</span>
<span class="t" style="left:1311.6px;top:850px;font-size:14.5px;transform:scaleX(0.927)">conver...</span>
<svg class="ic" style="left:1444.8px;top:844.3px" width="16.3" height="12.7" viewBox="0 0 16.3 12.700" fill="#3b7ddd" aria-hidden="true"><path fill-rule="evenodd" d="M8.150 0C11.700 0 14.700 2.500 16.200 5.900c.1.300.1.600 0 .9C14.700 10.200 11.700 12.700 8.150 12.700S1.600 10.200.1 6.800c-.1-.3-.1-.6 0-.9C1.600 2.500 4.600 0 8.150 0zM8.150 2.350a4 4 0 1 0 0 8a4 4 0 0 0 0-8z"/><path d="M8.150 3.500c-.3 0-.6.050-.9.150.4.550.35 1.300-.15 1.800-.5.500-1.250.55-1.800.15A2.850 2.850 0 1 0 8.150 3.500z"/></svg>
<svg class="ic" style="left:1474.2px;top:843.6px" width="14.8" height="14.4" viewBox="0 0 14.800 14.400" fill="#3b7ddd" aria-hidden="true"><path d="M0 2.800h10V.5c0-.4.500-.65.8-.35l3.800 3.150c.25.200.25.550 0 .75L10.800 7.200c-.3.300-.8.050-.8-.35V4.500H0z"/><path d="M14.800 11.600H4.800v2.300c0 .4-.5.650-.8.350L.2 11.100c-.25-.2-.25-.55 0-.75L4 7.200c.3-.3.800-.05.8.350V9.900h10z"/></svg>
<svg class="ic" style="left:1505.9px;top:843.5px" width="8.8" height="14.4" viewBox="0 0 8.8 14.4" aria-hidden="true"><path d="M7.700 4.500C7.400 3.200 6.200 2.450 4.500 2.450 2.700 2.450 1.450 3.350 1.450 4.700c0 3 6.300 1.500 6.300 4.900 0 1.500-1.300 2.450-3.300 2.450-1.900 0-3.150-.9-3.500-2.300" fill="none" stroke="#3b7ddd" stroke-width="1.600" stroke-linecap="round"/><path d="M4.400 .8v1.600M4.400 12.100v1.500" stroke="#3b7ddd" stroke-width="1.600" stroke-linecap="round"/></svg>
</div>
<div class="hr" style="top:882px"></div>
</section>
</main>
</body></html>
